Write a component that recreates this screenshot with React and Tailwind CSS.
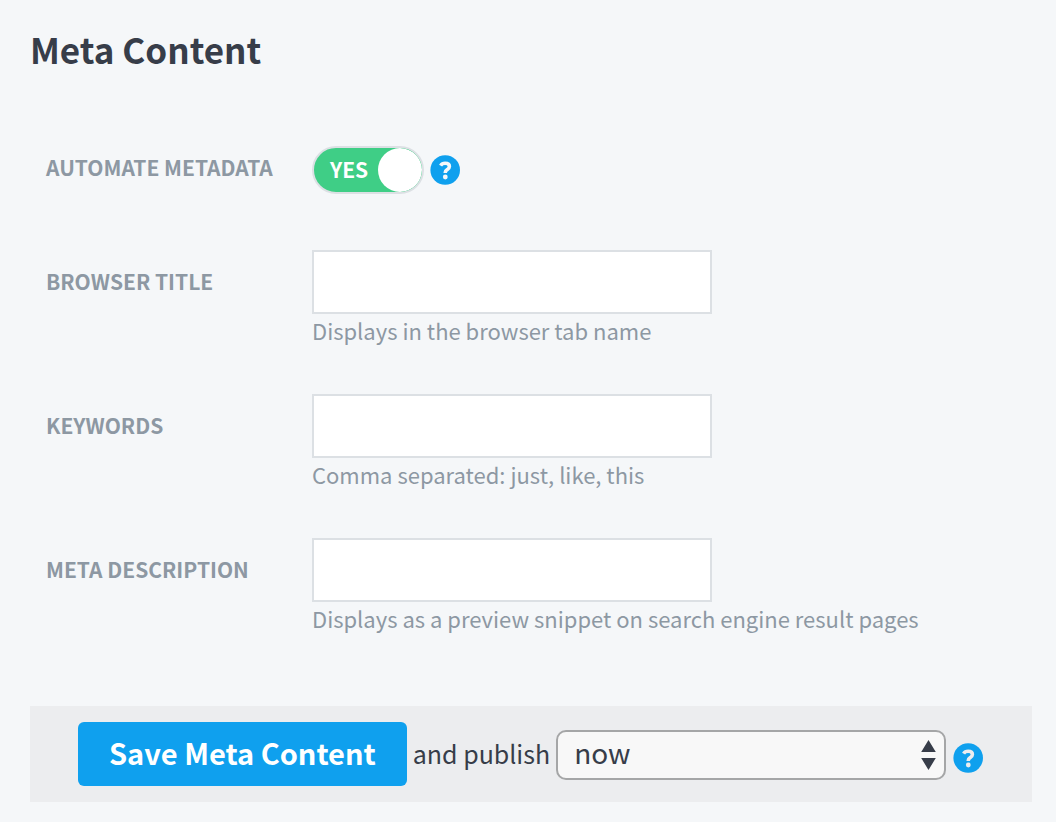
import { useState } from "react";

const fields = [
  { id: "browser-title", label: "Browser title", hint: "Displays in the browser tab name" },
  { id: "keywords", label: "Keywords", hint: "Comma separated: just, like, this" },
  {
    id: "meta-description",
    label: "Meta description",
    hint: "Displays as a preview snippet on search engine result pages",
  },
];

function HelpButton({ label, markClass }) {
  return (
    <button type="button" aria-label={label} className={"shrink-0 " + markClass}>
      <svg viewBox="0 0 30 30" className="size-[30px]" aria-hidden="true">
        <circle cx="15.2" cy="15" r="14.8" className="fill-[#0fa0ee]" />
        <path
          d="M10.6 10.6C11.6 9 13.2 8.3 15.1 8.3c2.5 0 4.300 1.200 4.300 3.200 0 1.500-.9 2.200-2.100 3.100-1.300.9-2 1.500-2 2.700v.8"
          fill="none"
          stroke="currentColor"
          strokeWidth="3.600"
        />
        <circle cx="15.3" cy="22" r="2.4" fill="currentColor" />
      </svg>
    </button>
  );
}

function Toggle({ id, checked, onChange }) {
  return (
    <span className="relative flex h-12 w-28 items-center overflow-hidden rounded-full border-2 border-[#dce0e4] bg-[#3fce86]">
      <input
        id={id}
        type="checkbox"
        role="switch"
        checked={checked}
        onChange={onChange}
        className="absolute inset-0 size-full cursor-pointer appearance-none rounded-full"
      />
      <span className="pointer-events-none flex-1 pb-0.5 pl-4 text-[21px] leading-8 font-bold text-white">
        {checked ? "YES" : "NO"}
      </span>
      <span className="pointer-events-none size-11 shrink-0 rounded-full bg-white" />
    </span>
  );
}

function FieldRow({ field }) {
  return (
    <div className="flex">
      <label
        htmlFor={field.id}
        className="flex h-16 w-[266px] shrink-0 items-center pb-0.5 text-[21px] leading-8 font-bold text-[#8d98a3] uppercase"
      >
        {field.label}
      </label>
      <div className="min-w-0 flex-1">
        <input
          id={field.id}
          type="text"
          aria-describedby={field.id + "-hint"}
          className="block h-16 w-full max-w-[400px] border-2 border-[#dce0e4] bg-white px-4 text-[22px] text-[#373d49] outline-none"
        />
        <p id={field.id + "-hint"} className="pb-0.5 text-[22px] leading-8 text-[#8d98a3]">
          {field.hint}
        </p>
      </div>
    </div>
  );
}

export default function App() {
  const [automate, setAutomate] = useState(true);
  return (
    <main className="min-h-screen bg-[#f5f7f9] px-[30px] pt-6 pb-5 font-['Noto_Sans_CJK_SC',sans-serif] text-[#373d49]">
      <h1 className="text-[35px] leading-[50px] font-bold">Meta Content</h1>
      <form onSubmit={(e) => e.preventDefault()}>
        <div className="flex flex-col gap-[46px] pt-[72px] pl-4">
          <div className="flex items-center pb-2.5">
            <label
              htmlFor="automate"
              className="w-[266px] shrink-0 pb-1.5 text-[21px] leading-8 font-bold text-[#8d98a3] uppercase"
            >
              Automate metadata
            </label>
            <Toggle id="automate" checked={automate} onChange={(e) => setAutomate(e.target.checked)} />
            <span className="flex pl-1.5">
              <HelpButton label="About automated metadata" markClass="text-[#f5f7f9]" />
            </span>
          </div>
          {fields.map((field) => (
            <FieldRow key={field.id} field={field} />
          ))}
        </div>
        <div className="mt-[70px] mr-[-6px] flex h-24 items-center bg-[#ecedef] pr-[49px] pl-12">
          <button
            type="submit"
            className="h-16 shrink-0 rounded-md bg-[#0fa0ee] px-[31px] pb-1 text-[29px] leading-10 font-bold text-white"
          >
            Save Meta Content
          </button>
          <label htmlFor="publish" className="shrink-0 px-1.5 pb-0.5 text-[25px] leading-10">
            and publish
          </label>
          <div className="relative min-w-0 flex-1 pt-0.5">
            <select
              id="publish"
              className="block h-[50px] w-full appearance-none rounded-[10px] border-2 border-[#a5a6a7] bg-[#f8f8f8] px-4 pb-1.5 text-[28px] leading-10 outline-none"
            >
              <option>now</option>
              <option>later</option>
            </select>
            <svg
              viewBox="0 0 16 30"
              className="pointer-events-none absolute top-3 right-2.5 h-[30px] w-4 fill-[#373d49]"
              aria-hidden="true"
            >
              <path d="M8.5 0l7.300 12H1.200zM8.500 30l7.300-12H1.200z" />
            </svg>
          </div>
          <span className="flex pt-2 pl-[7px]">
            <HelpButton label="About publishing" markClass="text-[#ecedef]" />
          </span>
        </div>
      </form>
    </main>
  );
}
